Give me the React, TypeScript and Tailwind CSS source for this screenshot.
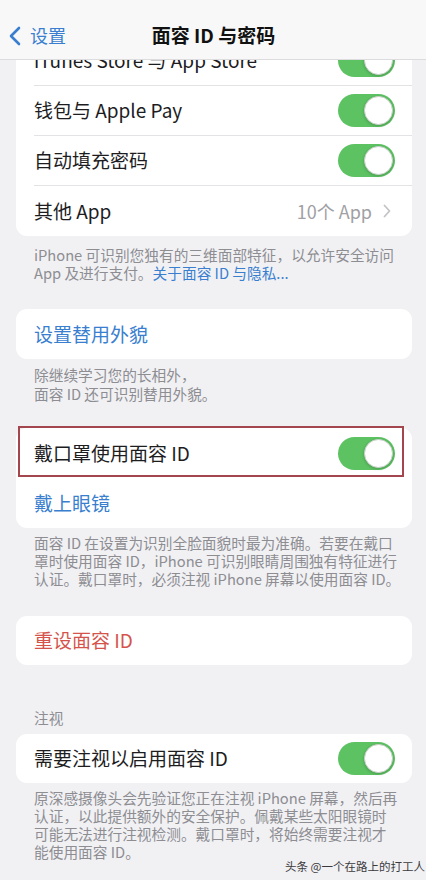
import React from "react";

const font = { fontFamily: '"Noto Sans CJK SC", "Noto Sans", sans-serif' };

function Toggle() {
  return (
    <div className="relative h-[33px] w-[57px] rounded-full bg-[#5cc262] shrink-0">
      <div className="absolute right-[2px] top-[2px] h-[29px] w-[29px] rounded-full bg-white border border-[#c9cfc9] shadow-[0_1px_3px_rgba(0,0,0,0.2)]" />
    </div>
  );
}

function Row({ label, right, sep = true, color = "text-[#1d1d1f]" }: { label: string; right?: React.ReactNode; sep?: boolean; color?: string }) {
  return (
    <div className="flex h-[50px] pl-[18px]">
      <div className={`flex flex-1 items-center justify-between pr-[17px] ${sep ? "border-b border-[#e3e3e6]" : ""}`}>
        <span className={`text-[19px] ${color}`}>{label}</span>
        {right}
      </div>
    </div>
  );
}

function Footer({ lines, className = "" }: { lines: React.ReactNode[]; className?: string }) {
  return (
    <div className={`flex flex-col pl-[34px] text-[14.7px] leading-[18px] text-[#8d8d92] ${className}`}>
      {lines.map((l, i) => (
        <span key={i} className="whitespace-nowrap">
          {l}
        </span>
      ))}
    </div>
  );
}

export default function App() {
  return (
    <div style={font} className="relative h-[880px] w-[426px] overflow-hidden bg-[#f1f1f4]">
      {/* Nav bar */}
      <div className="relative flex h-[60px] items-center border-b border-[#dcdcde] bg-[#f8f8f8]">
        <div className="flex items-center pl-[8px] pt-[12px]">
          <svg width="13" height="20" viewBox="0 0 13 20" className="mr-[9px]">
            <path d="M11 2 L3 10 L11 18" fill="none" stroke="#3a7fcf" strokeWidth="2.6" strokeLinecap="round" strokeLinejoin="round" />
          </svg>
          <span className="text-[18px] text-[#3a7fcf]">设置</span>
        </div>
        <div className="absolute left-0 right-0 top-[11px] flex h-[48px] items-center justify-center pl-[1px]">
          <span className="text-[19px] font-semibold text-[#111]">面容 ID 与密码</span>
        </div>
      </div>

      {/* Card 1 */}
      <div className="ml-[16px] mr-[14px] overflow-hidden rounded-b-[11px] bg-white">
        <div className="h-[26px] overflow-hidden">
          <div className="-mt-[24px]">
            <Row label="iTunes Store 与 App Store" right={<Toggle />} />
          </div>
        </div>
        <Row label="钱包与 Apple Pay" right={<Toggle />} />
        <Row label="自动填充密码" right={<Toggle />} />
        <Row
          label="其他 App"
          sep={false}
          right={
            <div className="mr-[4px] flex items-center gap-[11px] text-[18px] text-[#a0a0a5]">
              <span>10个 App</span>
              <svg width="8" height="14" viewBox="0 0 8 14">
                <path d="M1.5 1.5 L6.5 7 L1.5 12.5" fill="none" stroke="#c4c4c7" strokeWidth="1.8" strokeLinecap="round" strokeLinejoin="round" />
              </svg>
            </div>
          }
        />
      </div>

      <Footer
        className="mt-[10px]"
        lines={[
          "iPhone 可识别您独有的三维面部特征，以允许安全访问",
          <>
            App 及进行支付。<span className="text-[#3a7fcf]">关于面容 ID 与隐私...</span>
          </>,
        ]}
      />

      {/* Card 2 */}
      <div className="ml-[16px] mr-[14px] mt-[27px] rounded-[11px] bg-white">
        <Row label="设置替用外貌" sep={false} color="text-[#3a7fcf]" />
      </div>

      <Footer className="mt-[6px] leading-[19px]" lines={["除继续学习您的长相外，", "面容 ID 还可识别替用外貌。"]} />

      {/* Card 3 */}
      <div className="relative ml-[16px] mr-[14px] mt-[25px] rounded-[11px] bg-white">
        <Row label="戴口罩使用面容 ID" sep={false} right={<Toggle />} />
        <Row label="戴上眼镜" sep={false} color="text-[#3a7fcf]" />
        <div className="absolute left-[2px] top-[-2px] h-[51px] w-[386px] border-[2.5px] border-[#a4464e]" />
      </div>

      <Footer
        className="mt-[6px]"
        lines={[
          "面容 ID 在设置为识别全脸面貌时最为准确。若要在戴口",
          "罩时使用面容 ID，iPhone 可识别眼睛周围独有特征进行",
          "认证。戴口罩时，必须注视 iPhone 屏幕以使用面容 ID。",
        ]}
      />

      {/* Card 4 */}
      <div className="ml-[16px] mr-[14px] mt-[28px] rounded-[11px] bg-white">
        <div className="flex h-[49px] items-center pl-[18px]">
          <span className="text-[19px] text-[#d4544c]">重设面容 ID</span>
        </div>
      </div>

      <div className="mt-[44px] pl-[34px] text-[14.7px] leading-[18px] text-[#8d8d92]">注视</div>

      {/* Card 5 */}
      <div className="ml-[16px] mr-[14px] mt-[7px] rounded-[11px] bg-white">
        <div className="flex h-[49px] items-center justify-between pl-[18px] pr-[17px]">
          <span className="text-[19px] text-[#1d1d1f]">需要注视以启用面容 ID</span>
          <Toggle />
        </div>
      </div>

      <Footer
        className="mt-[6px]"
        lines={[
          "原深感摄像头会先验证您正在注视 iPhone 屏幕，然后再",
          "认证，以此提供额外的安全保护。佩戴某些太阳眼镜时",
          "可能无法进行注视检测。戴口罩时，将始终需要注视才",
          "能使用面容 ID。",
        ]}
      />

      <div className="absolute left-[285px] top-[858px] whitespace-nowrap text-[11.5px] leading-[16px] text-[#3a3a3c]">头条 @一个在路上的打工人</div>
    </div>
  );
}
